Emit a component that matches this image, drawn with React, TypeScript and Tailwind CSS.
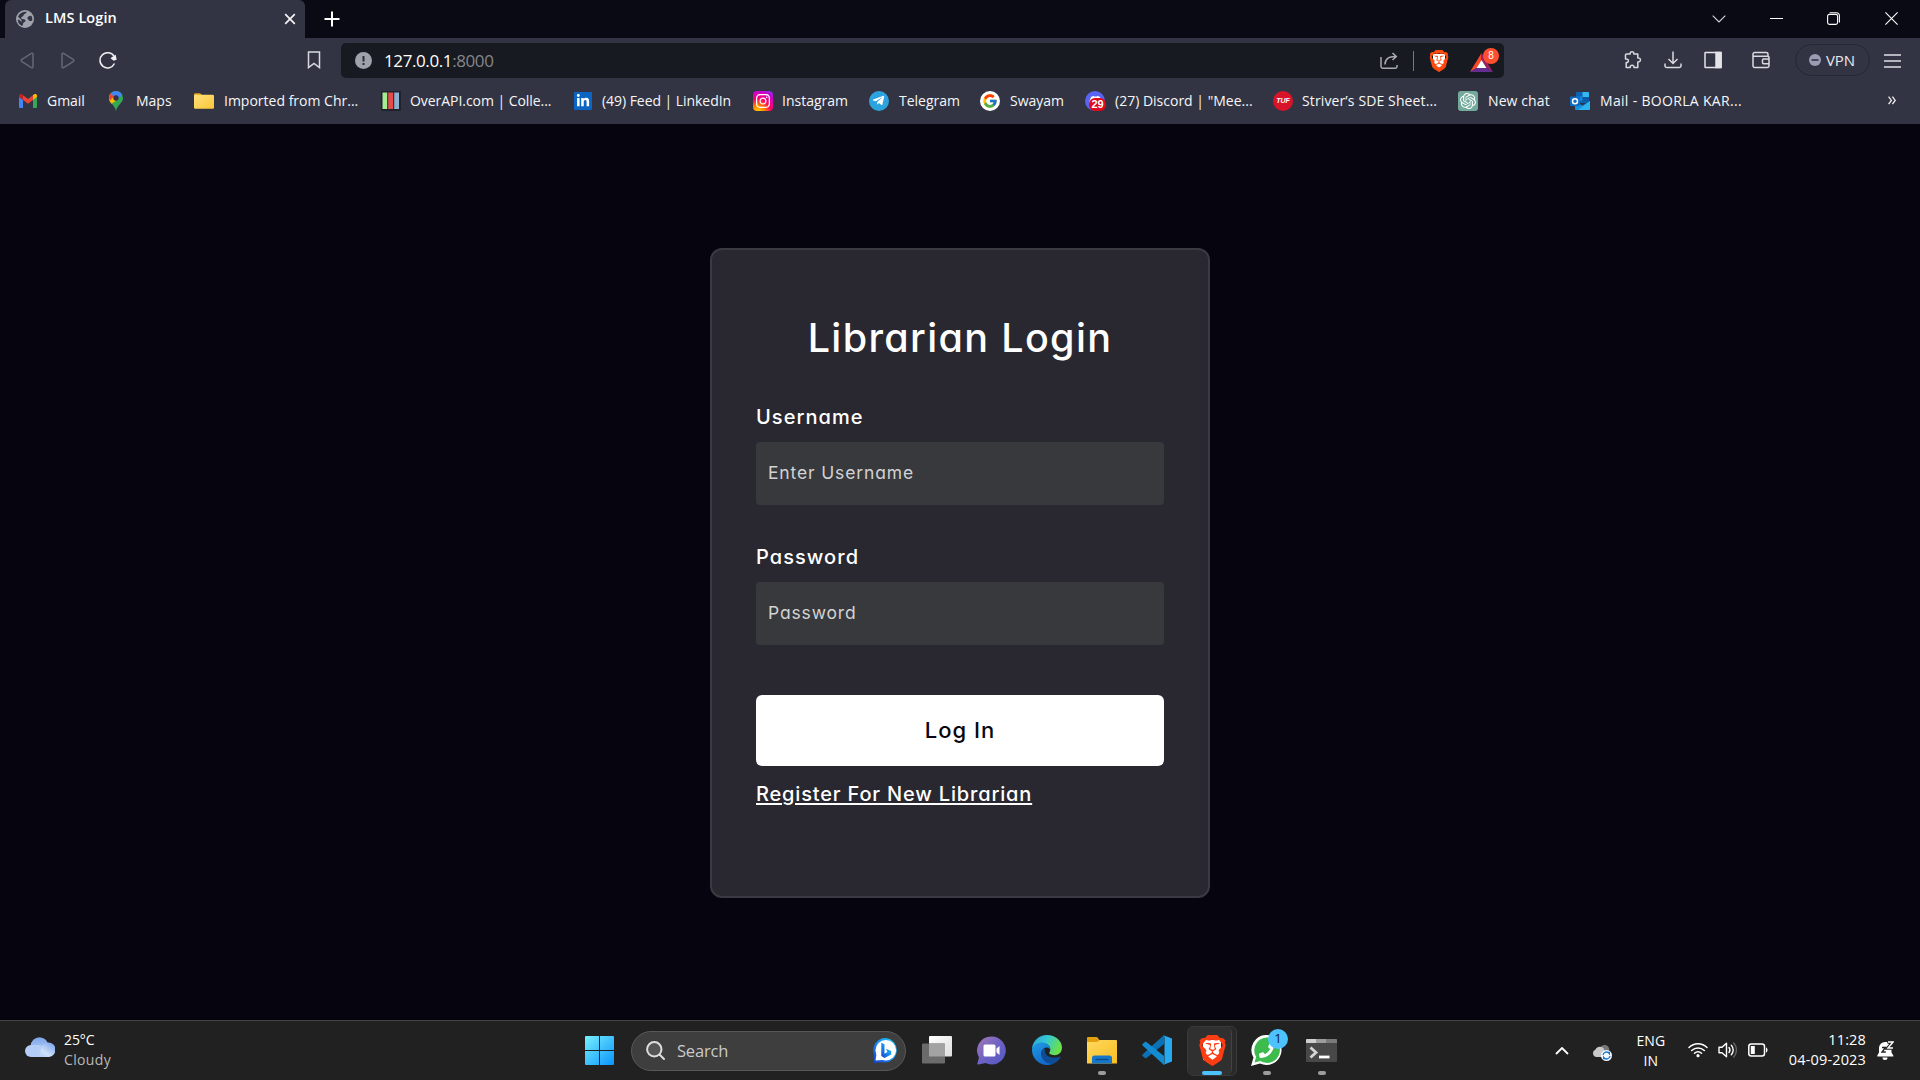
import React from 'react';
import { FaInstagram, FaLinkedinIn, FaTelegramPlane, FaDiscord, FaPhoneAlt } from 'react-icons/fa';
import { FcGoogle } from 'react-icons/fc';
import { SiBrave, SiOpenai } from 'react-icons/si';

function Globe() {
  return (
    <svg className="size-[18px]" viewBox="0 0 18 18">
      <circle cx="9" cy="9" r="9" fill="#a0a2ac" />
      <path d="M10.500 1.800C10.500 4 8 3.500 7.500 5.500 7 7 5 6.500 5.200 8.200 6 9.500 9 8.500 9.500 10.500 9.500 12.500 7 12 7 14c0 1-.5 1.500-1 2A7.300 7.300 0 0 1 1.800 9.500C3 10 4 10 4.500 11L5.500 12 5.500 10 2 6.800C3.500 3.200 7 1.500 10.500 1.800ZM15.500 6C14 5.500 12.500 6.500 11.500 7.500 11 9 12.500 9.500 13 10.500 13.800 11.500 15 11 16.200 10.500 16.500 9 16.300 7.500 15.500 6Z" fill="#323443" />
    </svg>
  );
}

function Gmail() {
  return (
    <svg className="w-[18px] h-[14px]" viewBox="0 0 18 14">
      <path d="M0 3v10a1 1 0 0 0 1 1h3V5.500Z" fill="#4285f4" />
      <path d="M18 3v10a1 1 0 0 1-1 1h-3V5.500Z" fill="#34a853" />
      <path d="M14 1.200V6l4-3V1.800C18 0 16 -.3 14.800.6Z" fill="#fbbc04" />
      <path d="M0 1.800V3l4 3V1.200L3.200.6C2-.3 0 0 0 1.800Z" fill="#c5221f" />
      <path d="M4 6V1.200L9 5l5-3.800V6L9 9.800Z" fill="#ea4335" />
    </svg>
  );
}

function MapsPin() {
  return (
    <svg className="w-[14px] h-5" viewBox="0 0 14 20">
      <path d="M7 0a7 7 0 0 1 7 7c0 5-5.500 6.500-7 13C5.500 13.500 0 12 0 7a7 7 0 0 1 7-7Z" fill="#34a853" />
      <path d="M1.600 2.500 4.800 5.300 9.200 8.300 2.600 12.700C1 11 0 9.500 0 7 0 5 .6 3.600 1.600 2.500Z" fill="#fbbc04" />
      <path d="M1.600 2.500 5 5.300 1 9.500C-.4 7 0 4.500 1.600 2.500Z" fill="#ea4335" />
      <path d="M1.600 2.500A7 7 0 0 1 13.200 3.800L9.500 8 4.600 5.200Z" fill="#4285f4" />
      <circle cx="7" cy="7" r="2.700" fill="#323443" />
    </svg>
  );
}

function Folder() {
  return (
    <svg className="w-5 h-4" viewBox="0 0 20 16">
      <defs>
        <linearGradient id="fold" x1="0" y1="0" x2="1" y2="1"><stop stopColor="#ffe07c" /><stop offset="1" stopColor="#f9c536" /></linearGradient>
      </defs>
      <path d="M0 1.500A1.200 1.200 0 0 1 1.200.3H6l2 1.700h10.500V8H0Z" fill="#e3a21b" />
      <rect y="1.800" width="20" height="14" rx="1.300" fill="url(#fold)" />
    </svg>
  );
}

function OverApi() {
  return (
    <svg className="size-5" viewBox="0 0 20 20">
      <rect width="20" height="20" rx="1" fill="#20232c" />
      <path d="M1.500 1.500h4.700v16.500H1.500Z" fill="#a3ec92" />
      <path d="M7.200 1.500h5v16.500h-5Z" fill="#e54b4b" />
      <path d="M13.200 1.500h4.800v16.500h-4.800Z" fill="#8db0d0" />
    </svg>
  );
}

function LinkedIn() {
  return <span className="grid size-[18px] place-items-center rounded-[1px] bg-[#0a66c2]"><FaLinkedinIn className="size-[14px]" color="#fff" /></span>;
}

function Instagram() {
  return (
    <span className="grid size-5 place-items-center rounded-[4px] bg-[radial-gradient(circle_at_25%_105%,#ffd600_0%,#ff7a00_28%,#ff0169_50%,#d300c5_75%,#7638fa_100%)]">
      <FaInstagram className="size-4" color="#fff" />
    </span>
  );
}

function Telegram() {
  return <span className="grid size-5 place-items-center rounded-full bg-[#2ca3dd]"><FaTelegramPlane className="mr-[2px] size-[13px]" color="#fff" /></span>;
}

function Google() {
  return <span className="grid size-5 place-items-center rounded-full bg-white"><FcGoogle className="size-4" /></span>;
}

function Discord() {
  return (
    <span className="relative grid size-5 place-items-center rounded-full bg-[#5865f2]">
      <FaDiscord className="size-[13px]" color="#fff" />
      <span className="absolute -right-px bottom-0 flex h-[13px] w-[17px] items-center justify-center rounded-[6px] bg-[#e0081c] font-['Liberation_Sans'] text-[11px] font-bold leading-none text-white">29</span>
    </span>
  );
}

function Tuf() {
  return <span className="grid size-5 place-items-center rounded-full bg-[#d7142a] font-['Liberation_Sans'] text-[7px] font-bold italic leading-none text-white">TUF</span>;
}

function ChatGpt() {
  return <span className="grid size-5 place-items-center rounded-[3px] bg-[#74aa9c]"><SiOpenai className="size-4" color="#fff" /></span>;
}

function Outlook() {
  return (
    <svg className="w-5 h-[18px]" viewBox="0 0 20 18">
      <path d="M6 1a1 1 0 0 1 1-1h11a1 1 0 0 1 1 1v10H6Z" fill="#0a63b5" />
      <path d="M12.500 0H18a1 1 0 0 1 1 1v4h-6.500Z" fill="#35b8f1" />
      <path d="M6 4.500h6.500V9H6Z" fill="#1488dc" />
      <path d="M12.500 5H19v4.500h-6.500Z" fill="#0c59a4" />
      <path d="M5 9.500l7.500 4L20 9v8a1 1 0 0 1-1 1H6a1 1 0 0 1-1-1Z" fill="#1490df" />
      <path d="M20 9v8a1 1 0 0 1-1 1H8Z" fill="#2cb3f0" />
      <rect y="4.500" width="10" height="9.500" rx="1" fill="#0f6cc4" />
      <circle cx="5" cy="9.200" r="2.500" fill="none" stroke="#fff" strokeWidth="1.500" />
    </svg>
  );
}

const bookmarks = [
  { Icon: Gmail, label: 'Gmail', width: 'w-[90px]', iconBox: 'w-[18px]', text: 'ml-[10px] tracking-[-0.05px]' },
  { Icon: MapsPin, label: 'Maps', width: 'w-[85px]', iconBox: 'w-[14px]', text: 'ml-[13px]' },
  { Icon: Folder, label: 'Imported from Chr...', width: 'w-[187px]', iconBox: 'w-5', text: 'ml-[10px]' },
  { Icon: OverApi, label: 'OverAPI.com | Colle...', width: 'w-[192px]', iconBox: 'w-5', text: 'ml-[9px] tracking-[-0.05px]' },
  { Icon: LinkedIn, label: '(49) Feed | LinkedIn', width: 'w-[180px]', iconBox: 'w-5', text: 'ml-[9px] tracking-[-0.05px]' },
  { Icon: Instagram, label: 'Instagram', width: 'w-[116px]', iconBox: 'w-5', text: 'ml-[9px]' },
  { Icon: Telegram, label: 'Telegram', width: 'w-[111px]', iconBox: 'w-5', text: 'ml-[10px]' },
  { Icon: Google, label: 'Swayam', width: 'w-[105px]', iconBox: 'w-5', text: 'ml-[10px]' },
  { Icon: Discord, label: '(27) Discord | "Mee...', width: 'w-[188px]', iconBox: 'w-5', text: 'ml-[10px]' },
  { Icon: Tuf, label: 'Striver’s SDE Sheet...', width: 'w-[185px]', iconBox: 'w-5', text: 'ml-[9px] tracking-[0.12px]' },
  { Icon: ChatGpt, label: 'New chat', width: 'w-[112px]', iconBox: 'w-5', text: 'ml-[10px] tracking-[0.1px]' },
  { Icon: Outlook, label: 'Mail - BOORLA KAR...', width: 'w-[180px]', iconBox: 'w-5', text: 'ml-[10px] tracking-[0.32px]' },
];

function TabStrip() {
  return (
    <div className="flex h-[38px] bg-[#0a0a14] pl-[5px]">
      <div className="flex w-[300px] items-center rounded-t-[6px] bg-[#323443] pl-[11px] pr-[9px]">
        <Globe />
        <span className="ml-[11px] pb-[2px] text-[14.5px] font-semibold tracking-[0.1px] text-white">LMS Login</span>
        <svg className="ml-auto size-[12px]" viewBox="0 0 12 12" stroke="#f4f4f6" strokeWidth="1.700"><path d="M1.200 1.200l9.600 9.600M10.800 1.200L1.200 10.800" /></svg>
      </div>
      <svg className="ml-[19px] mt-[11px] size-4" viewBox="0 0 16 16" stroke="#fff" strokeWidth="2"><path d="M8 .5v15M.5 8h15" /></svg>
      <div className="ml-auto flex items-center pb-px pr-[22px]">
        <svg className="mr-[44px] h-2 w-[14px]" viewBox="0 0 14 8" fill="none" stroke="#d8d8dc" strokeWidth="1.100"><path d="M.7.7 7 7l6.300-6.300" /></svg>
        <span className="mr-[44px] h-px w-[13px] bg-white" />
        <svg className="mr-[45px] size-[13px]" viewBox="0 0 13 13" fill="none" stroke="#fff" strokeWidth="1.100"><rect x=".6" y="2.400" width="10" height="10" rx="1.800" /><path d="M2.600.8h7a2.700 2.700 0 0 1 2.800 2.700v7" /></svg>
        <svg className="size-[13px]" viewBox="0 0 13 13" stroke="#fff" strokeWidth="1.100"><path d="M.4.4l12.200 12.200M12.600.4.4 12.600" /></svg>
      </div>
    </div>
  );
}

function Toolbar() {
  return (
    <div className="flex h-[45px] items-center">
      <svg className="ml-5 mb-px h-[17px] w-[14px]" viewBox="0 0 14 17" fill="none" stroke="#656774" strokeWidth="1.500" strokeLinejoin="round"><path d="M13 2.300v12.400c0 1-.9 1.400-1.600.9L1.500 9.300a1 1 0 0 1 0-1.600l9.900-6.300c.7-.5 1.600-.1 1.600.9Z" /></svg>
      <svg className="ml-[27px] mb-px h-[17px] w-[14px]" viewBox="0 0 14 17" fill="none" stroke="#656774" strokeWidth="1.500" strokeLinejoin="round"><path d="M1 2.300v12.400c0 1 .9 1.400 1.600.9l9.900-6.300a1 1 0 0 0 0-1.600L2.600 1.400C1.900.9 1 1.300 1 2.300Z" /></svg>
      <svg className="ml-6 mb-px h-[17px] w-[18px]" viewBox="0 0 18 17" fill="none" stroke="#f0f0f3" strokeWidth="1.500"><path d="M15.200 4.500A7.600 7.600 0 1 0 15.500 11.500" /><path d="M12.800 6.200l3.400-2.300.6 3.300-2 .7Z" fill="#f0f0f3" /></svg>
      <svg className="ml-[190px] mb-px h-[18px] w-[14px]" viewBox="0 0 14 18" fill="none" stroke="#d9dae0" strokeWidth="1.500"><path d="M1.500 1h11v15.600L7 12.400l-5.500 4.200Z" /></svg>
      <div className="ml-5 flex h-[35px] w-[1163px] items-center rounded-[5px] bg-[#181a21] pl-[14px] pr-[5px]">
        <svg className="size-[17px]" viewBox="0 0 17 17"><circle cx="8.500" cy="8.500" r="8.500" fill="#9fa1ab" /><path d="M7.500 4h2v5.500h-2ZM7.500 11h2v2h-2Z" fill="#2a2c36" /></svg>
        <span className="ml-3 text-[17px] tracking-[-0.4px] text-white">127.0.0.1<span className="text-[#85868c]">:8000</span></span>
        <svg className="ml-auto h-[17px] w-[18px]" viewBox="0 0 18 17" fill="none" stroke="#a9abb0" strokeWidth="1.500"><path d="M1 5v9.500a1.700 1.700 0 0 0 1.700 1.700h12.600a1.700 1.700 0 0 0 1.700-1.700V13" /><path d="M5 12.500C5 7.500 8 4.600 15.500 4.600M12.500 1l3.800 3.600L12.500 8" /></svg>
        <span className="ml-[15px] h-5 w-px bg-[#77797f]" />
        <span className="relative ml-[14px] grid size-[22px] place-items-center">
          <span className="absolute h-[14px] w-[12px] bg-white" />
          <SiBrave className="relative size-[22px]" color="#ff4a0d" />
        </span>
        <span className="relative ml-[20px] flex h-[22px] w-[29px] items-end">
          <svg className="h-[19px] w-[23px]" viewBox="0 0 23 19">
            <path d="M11.500 0 0 19l6.500-4 5-8Z" fill="#ff4724" />
            <path d="M11.500 0 23 19l-6.500-4-5-8Z" fill="#9e1f63" />
            <path d="M0 19h23l-6.500-4h-10Z" fill="#662d91" />
            <path d="M11.500 7l5 8h-10Z" fill="#fff" />
          </svg>
          <span className="absolute -top-[2px] right-0 grid size-4 place-items-center rounded-full bg-[#ff4f2e] font-['Liberation_Sans'] text-[10px] leading-none text-white">8</span>
        </span>
      </div>
      <svg className="ml-[120px] mb-px size-[18px]" viewBox="0 0 18 18" fill="none" stroke="#d9dae0" strokeWidth="1.500" strokeLinejoin="round"><path d="M2.500 3h3.700c-.6-3 4.200-3 3.600 0h4v4c3-.8 4 3.800 0 4v5.500H10c.4-3-4.200-3-3.800 0H2.200v-5C5 12 5.500 7.500 1.500 8V4a1 1 0 0 1 1-1Z" /></svg>
      <svg className="ml-[22px] mb-px size-[18px]" viewBox="0 0 18 18" fill="none" stroke="#d9dae0" strokeWidth="1.500"><path d="M9 .5v12M4.500 8 9 12.500 13.500 8M1 12.500v2.300A1.800 1.800 0 0 0 2.800 16.600h12.400a1.800 1.800 0 0 0 1.800-1.800v-2.300" /></svg>
      <svg className="ml-[22px] mb-px size-[18px]" viewBox="0 0 18 18" fill="none" stroke="#e4e4e8" strokeWidth="1.500"><rect x="1" y="1.500" width="16" height="15" rx=".6" /><path d="M12 1.500h5v15h-5Z" fill="#e4e4e8" /></svg>
      <svg className="ml-[30px] mb-px size-[18px]" viewBox="0 0 18 18" fill="none" stroke="#d9dae0" strokeWidth="1.500"><path d="M16 5.200V3.200a1.700 1.700 0 0 0-1.700-1.700H2.700A1.700 1.700 0 0 0 1 3.200v11.600a1.700 1.700 0 0 0 1.700 1.700h12.600a1.700 1.700 0 0 0 1.700-1.700V6.500a1.300 1.300 0 0 0-1.300-1.300H1.500" /><path d="M17 8h-5.500a1 1 0 0 0-1 1v2.800a1 1 0 0 0 1 1H17" /></svg>
      <div className="ml-[25px] mb-px flex h-8 w-[75px] items-center rounded-full border border-[#252733] pl-[13px]">
        <svg className="size-[12px]" viewBox="0 0 12 12"><circle cx="6" cy="6" r="6" fill="#9a9cb3" /><path d="M2.500 5.200h7v1.600h-7Z" fill="#323443" /></svg>
        <span className="ml-[5px] text-[15px] tracking-[-0.1px] text-[#e8e8ee]">VPN</span>
      </div>
      <svg className="ml-[14px] h-[14px] w-[17px]" viewBox="0 0 17 14" stroke="#e0e0e5" strokeWidth="1.500"><path d="M0 1h17M0 7h17M0 13h17" /></svg>
    </div>
  );
}

function Bookmarks() {
  return (
    <div className="flex h-[36px] items-center pb-px pl-[19px]">
      {bookmarks.map(({ Icon, label, width, iconBox, text }) => (
        <div key={label} className={'flex shrink-0 items-center ' + width}>
          <span className={'flex justify-center ' + iconBox}><Icon /></span>
          <span className={'whitespace-nowrap pb-px text-[14px] text-[#f6f6f8] ' + text}>{label}</span>
        </div>
      ))}
      <svg className="ml-[138px] h-[9px] w-2" viewBox="0 0 8 9" fill="none" stroke="#eee" strokeWidth="1.300"><path d="M.6.6 3.400 4.400.6 8.200M4.400.6 7.200 4.400 4.400 8.200" /></svg>
    </div>
  );
}

function Field({ label, placeholder }: { label: string; placeholder: string }) {
  return (
    <label className="flex flex-col">
      <span className="text-[20px] font-medium leading-[30px] tracking-[1.05px]">{label}</span>
      <input placeholder={placeholder} className="mt-[10px] h-[63px] rounded-[4px] bg-[#38393d] px-3 pb-[3px] text-[17.5px] tracking-[0.85px] outline-none placeholder:text-[#d2d2d3]" />
    </label>
  );
}

function LoginCard() {
  return (
    <form className="flex h-[650px] w-[500px] flex-col rounded-[12px] border-2 border-[#3b3a42] bg-[#292730] px-11 pt-[63px] font-[Inter,sans-serif] text-white [font-feature-settings:'cv11']">
      <h1 className="mb-[39px] text-center text-[39.5px] font-medium leading-[50px] tracking-[1.35px]">Librarian Login</h1>
      <div className="flex flex-col gap-[37px]">
        <Field label="Username" placeholder="Enter Username" />
        <Field label="Password" placeholder="Password" />
      </div>
      <button type="button" className="mt-[50px] h-[71px] shrink-0 rounded-[6px] bg-white text-[22px] font-medium tracking-[1px] text-[#080710]">Log In</button>
      <a className="mt-[13px] self-start text-[20px] font-medium leading-[30px] tracking-[0.83px] underline decoration-2 underline-offset-[2px]">Register For New Librarian</a>
    </form>
  );
}

function WindowsLogo() {
  return (
    <svg className="size-[29px]" viewBox="0 0 29 29">
      <defs><linearGradient id="win" x1="0" y1="0" x2="1" y2="1"><stop stopColor="#77f0fd" /><stop offset="1" stopColor="#0a94fc" /></linearGradient></defs>
      <path d="M0 1a1 1 0 0 1 1-1h13v14H0ZM15 0h13a1 1 0 0 1 1 1v13H15ZM0 15h14v14H1a1 1 0 0 1-1-1ZM15 15h14v13a1 1 0 0 1-1 1H15Z" fill="url(#win)" />
    </svg>
  );
}

function Bing() {
  return (
    <svg className="size-[25px]" viewBox="0 0 25 25">
      <defs><linearGradient id="bing" x1="0" y1="1" x2="1" y2="0"><stop stopColor="#1540c8" /><stop offset=".5" stopColor="#1a8cf0" /><stop offset="1" stopColor="#20d0f0" /></linearGradient></defs>
      <path d="M12.500 0A12.300 12.300 0 1 1 9 24.300L.5 25 1 17A12.300 12.300 0 0 1 12.500 0Z" fill="url(#bing)" />
      <circle cx="12.800" cy="12.300" r="10.300" fill="#fff" /><path d="M2.500 22.500 3.500 16l6 6Z" fill="#fff" />
      <path d="M8.300 4.800l3.200 1.500v9.400l3-1.800-1.600-3.200 5.300 2.300v3.400L11.500 20l-3.200-2Z" fill="url(#bing)" />
    </svg>
  );
}

function TaskView() {
  return (
    <svg className="h-7 w-[30px]" viewBox="0 0 30 28">
      <defs><linearGradient id="tv" x1="0" y1="0" x2="1" y2="1"><stop stopColor="#fff" /><stop offset="1" stopColor="#dedede" /></linearGradient></defs>
      <rect x="7" width="23" height="20.500" rx="1" fill="url(#tv)" />
      <rect y="7.500" width="23" height="20" rx="1" fill="#6b6b6b" />
      <path d="M7 7.500h16v13H7Z" fill="#a3a3a3" />
    </svg>
  );
}

function Chat() {
  return (
    <svg className="size-[29px]" viewBox="0 0 29 29">
      <defs><linearGradient id="chat" x1="0" y1="0" x2="1" y2="1"><stop stopColor="#a379b8" /><stop offset=".5" stopColor="#6f62c4" /><stop offset="1" stopColor="#5158c4" /></linearGradient></defs>
      <path d="M14.500.5A14 14 0 1 1 8.500 27L1.500 28.500C.5 28.700 0 28 .5 27L2 21.500A14 14 0 0 1 14.500.5Z" fill="url(#chat)" />
      <rect x="6.500" y="8.500" width="12" height="12" rx="1.500" fill="#fff" /><path d="M19.500 12.500l3-2.500v9l-3-2.500Z" fill="#fff" />
    </svg>
  );
}

function Edge() {
  return (
    <svg className="size-[30px]" viewBox="0 0 30 30">
      <defs>
        <linearGradient id="e1" x1="0" y1="0" x2="1" y2=".4"><stop stopColor="#2a9fe0" /><stop offset=".5" stopColor="#35c8d2" /><stop offset="1" stopColor="#6ae04c" /></linearGradient>
        <linearGradient id="e2" x1="0" y1="0" x2=".5" y2="1"><stop stopColor="#219be4" /><stop offset="1" stopColor="#1169c8" /></linearGradient>
      </defs>
      <path d="M0 14C.5 6 7 0 15 0c8.500 0 15 6 15 12.500 0 5-3.500 7.700-7.500 7.700-3.800 0-5.700-1.600-5.200-2.600C20 14 17.500 8.500 12 8.500 6 8.500 2 11 0 14Z" fill="url(#e1)" />
      <path d="M0 14.500C1 9.500 6 7 11 7.500c4.500.4 7.500 3.700 7 7-2-3-7-2.500-7.500 2C10 22 15 28 22 28.300A15 15 0 0 1 0 14.500Z" fill="url(#e2)" />
      <path d="M10.500 14.500C8 17 8.500 22 12 25.500c4 4 9.500 4 12.500 1.500 2-1.500 3.500-3.500 4-4.800.3-.7-.2-1-.8-.7C23 24 14 22.500 13 17c-.2-1 0-2 .5-3Z" fill="#0e4c95" />
    </svg>
  );
}

function Explorer() {
  return (
    <svg className="h-[27px] w-[30px]" viewBox="0 0 30 27">
      <defs><linearGradient id="ex" x1="0" y1="0" x2="1" y2="1"><stop stopColor="#ffd95e" /><stop offset="1" stopColor="#f9bd22" /></linearGradient></defs>
      <path d="M0 1a1 1 0 0 1 1-1h9l2.500 3H29v8H0Z" fill="#e0a010" />
      <path d="M0 5h10l3-2h16a1 1 0 0 1 1 1v22.500H0Z" fill="url(#ex)" />
      <path d="M5 26.500V21a2.500 2.500 0 0 1 2.500-2.500h15A2.500 2.500 0 0 1 25 21v5.500Z" fill="#1677c9" />
      <path d="M8.500 22.500h13" stroke="#0b4a87" strokeWidth="1.300" />
    </svg>
  );
}

function VsCode() {
  return (
    <svg className="size-[30px]" viewBox="0 0 30 30">
      <path d="M22 0v9L4.500 23c-.5.400-1 .4-1.500 0L.8 21.200c-.6-.5-.6-1.400 0-1.900Z" fill="#0c70b4" />
      <path d="M22 30v-9L4.500 7c-.5-.4-1-.4-1.500 0L.8 8.800c-.6.5-.6 1.400 0 1.900Z" fill="#128bd2" />
      <path d="M21.500.3 30 3.500v23L21.500 29.700C22.500 29 22.500 28 22.500 27V3C22.500 2 22.300 1 21.500.3Z" fill="#27a9f0" />
    </svg>
  );
}

function WhatsApp() {
  return (
    <span className="relative grid size-[31px] place-items-center">
      <svg className="absolute inset-0 size-[31px]" viewBox="0 0 31 31">
        <path d="M16 0A15 15 0 1 1 9 28.500L0 31 2.500 22.500A15 15 0 0 1 16 0Z" fill="#fff" />
        <path d="M16 2.500A12.700 12.700 0 1 1 9.500 26L3.500 27.500 5.200 21.800A12.700 12.700 0 0 1 16 2.500Z" fill="#3dbb4d" />
      </svg>
      <FaPhoneAlt className="relative size-[15px] -scale-x-100" color="#fff" />
      <span className="absolute -right-[6px] -top-[6px] grid size-5 place-items-center rounded-full bg-[#4cc2ff] text-[13px] leading-none text-[#10212c]">1</span>
    </span>
  );
}

function Terminal() {
  return (
    <svg className="h-[23px] w-[31px]" viewBox="0 0 31 23">
      <rect width="31" height="23" rx="1" fill="#484848" />
      <path d="M0 1a1 1 0 0 1 1-1h9v4H0Z" fill="#cfcfcf" /><path d="M10 0h10v4H10Z" fill="#9c9c9c" /><path d="M20 0h10a1 1 0 0 1 1 1v3H20Z" fill="#7a7a7a" />
      <path d="M4.500 8.500 10 13.500 4.500 18.500" fill="none" stroke="#d4d4d4" strokeWidth="2.800" /><path d="M13 18h10.500" stroke="#fff" strokeWidth="2.800" />
    </svg>
  );
}

function TaskItem({ children, indicator }: { children: React.ReactNode; indicator?: boolean }) {
  return (
    <span className="flex h-[50px] w-[55px] shrink-0 flex-col items-center">
      <span className="grid h-[45px] place-items-center pt-[4px]">{children}</span>
      {indicator && <span className="h-1 w-2 rounded-full bg-[#9c9c9c]" />}
    </span>
  );
}

function Cloud() {
  return (
    <svg className="h-5 w-[30px]" viewBox="0 0 30 20">
      <defs>
        <linearGradient id="cl" x1="0" y1="0" x2="0" y2="1"><stop stopColor="#7ba5e8" /><stop offset="1" stopColor="#c4d9fb" /></linearGradient>
        <linearGradient id="cl2" x1="1" y1="0" x2="0" y2="1"><stop stopColor="#6f9ae6" /><stop offset=".6" stopColor="#cfe1fc" /><stop offset="1" stopColor="#a9c6f5" /></linearGradient>
      </defs>
      <circle cx="14.500" cy="9" r="8.800" fill="url(#cl)" />
      <rect y="8" width="20" height="12" rx="6" fill="#b5cef7" />
      <path d="M10 20c4 0 5-4 6-8a7.300 7.300 0 1 1 8 8Z" fill="url(#cl2)" />
    </svg>
  );
}

function Taskbar() {
  return (
    <footer className="flex h-[60px] items-stretch border-t border-[#454545] bg-[#212121]">
      <div className="flex w-[584px] shrink-0 items-center pl-[25px]">
        <span className="-mt-[7px]"><Cloud /></span>
        <div className="ml-[9px] pb-[2px] text-[14px] leading-5 text-white">
          <div className="tracking-[-0.1px]">25°C</div>
          <div className="tracking-[0.35px] text-[#b8b8b8]">Cloudy</div>
        </div>
      </div>
      <div className="flex shrink-0 items-center">
        <span className="ml-[1px] shrink-0"><WindowsLogo /></span>
        <div className="ml-[17px] flex h-10 w-[275px] shrink-0 items-center rounded-full border border-[#585858] bg-[#3e3e3e] pl-[14px] pr-[7px]">
          <svg className="size-5" viewBox="0 0 20 20" fill="none" stroke="#dedede" strokeWidth="2" strokeLinecap="round"><circle cx="8.300" cy="8.300" r="7.200" fill="#555" /><path d="M13.500 13.500l4.500 4.500" /></svg>
          <span className="ml-[11px] pt-px text-[16.5px] tracking-[-0.2px] text-[#cacaca]">Search</span>
          <span className="ml-auto"><Bing /></span>
        </div>
        <div className="ml-[3px] flex shrink-0">
          <TaskItem><TaskView /></TaskItem>
          <TaskItem><Chat /></TaskItem>
          <TaskItem><Edge /></TaskItem>
          <TaskItem indicator><Explorer /></TaskItem>
          <TaskItem><VsCode /></TaskItem>
          <span className="flex w-[55px] justify-center">
            <span className="flex h-[50px] w-[50px] rounded-[6px] border border-[#3a3a3a] bg-[#292929]">
              <span className="flex h-full w-[44px] flex-col items-center rounded-[6px] border-r border-[#434343] bg-[#303030]">
                <span className="relative ml-[6px] mt-[8px] grid size-[30px] place-items-center">
                  <span className="absolute h-5 w-[18px] bg-white" />
                  <SiBrave className="relative size-[31px]" color="#ff3d12" />
                </span>
                <span className="ml-[6px] mt-[6px] h-1 w-5 rounded-full bg-[#4cc2ff]" />
              </span>
            </span>
          </span>
          <TaskItem indicator><WhatsApp /></TaskItem>
          <TaskItem indicator><Terminal /></TaskItem>
        </div>
      </div>
      <div className="ml-auto flex items-center pr-[26px] text-white">
        <svg className="mr-[23px] h-2 w-[14px]" viewBox="0 0 14 8" fill="none" stroke="#fff" strokeWidth="1.800"><path d="M1 7l6-6 6 6" /></svg>
        <svg className="mr-[24px] mt-[2px] h-[18px] w-5" viewBox="0 0 20 18">
          <path d="M8 4.500a5 5 0 0 1 9.300 1.800L17 13H9Z" fill="#777" /><path d="M4 14a4 4 0 0 1-.5-7.600 5 5 0 0 1 8.500-.4L14 14Z" fill="#c9c9c9" />
          <circle cx="14.500" cy="12.500" r="5.500" fill="#f2f8ff" /><path d="M11 12a3.500 3.500 0 0 1 6.300-1.500v-1.700M18 13a3.500 3.500 0 0 1-6.300 1.500v1.700" fill="none" stroke="#1274cf" strokeWidth="1.300" />
        </svg>
        <div className="mr-[22px] w-[30px] text-center text-[14px] leading-5"><div>ENG</div><div>IN</div></div>
        <svg className="mr-[10px] mb-px h-4 w-5" viewBox="0 0 20 16" fill="none" stroke="#fff" strokeWidth="1.500" strokeLinecap="round"><path d="M1 5.500a12.700 12.700 0 0 1 18 0M3.700 8.500a9 9 0 0 1 12.600 0M6.500 11.300a5 5 0 0 1 7 0" /><circle cx="10" cy="13.700" r="1.600" fill="#fff" stroke="none" /></svg>
        <svg className="mr-[10px] mb-px h-4 w-5" viewBox="0 0 20 16" fill="none" stroke="#fff" strokeWidth="1.400" strokeLinejoin="round" strokeLinecap="round"><path d="M1 5.300h3L8.500 1.200v13.600L4 10.700H1Z" /><path d="M11 5.500a4 4 0 0 1 0 5M13.300 3.200a7 7 0 0 1 0 9.600" /><path d="M15.700 1a10.300 10.300 0 0 1 0 14" stroke="#666" /></svg>
        <svg className="mr-[21px] mb-px h-[14px] w-5" viewBox="0 0 20 14"><rect x=".8" y="1" width="15.700" height="12" rx="2.500" fill="none" stroke="#fff" strokeWidth="1.500" /><path d="M2.800 3h4v8h-4ZM18 4.500c2 .5 2 4.500 0 5Z" fill="#fff" /></svg>
        <div className="mr-[11px] whitespace-nowrap pb-[2px] text-right text-[14.5px] leading-5 tracking-[0.15px]"><div>11:28</div><div>04-09-2023</div></div>
        <svg className="h-[19px] w-[17px]" viewBox="0 0 17 19"><path d="M8 1a6 6 0 0 0-6 6v4.500L.3 14.500V15.500h16v-1L14.500 11.500V5L10 1Z" fill="#fff" /><path d="M5.500 16.500h5a2.500 2.500 0 0 1-5 0Z" fill="#fff" /><path d="M5 6.500h3.500L5 11h3.800" fill="none" stroke="#212121" strokeWidth="1.300" /><path d="M10.500 1H16l-5 6H16.500" fill="none" stroke="#212121" strokeWidth="3.500" /><path d="M11 1h5l-5 6H16" fill="none" stroke="#fff" strokeWidth="1.400" /></svg>
      </div>
    </footer>
  );
}

export default function App() {
  return (
    <div className="flex h-[1080px] w-[1920px] flex-col overflow-hidden bg-[#06040f] font-['Open_Sans',sans-serif]">
      <header>
        <TabStrip />
        <div className="h-[86px] bg-[#323443]">
          <Toolbar />
          <Bookmarks />
        </div>
      </header>
      <main className="flex grow justify-center pt-[124px]">
        <LoginCard />
      </main>
      <Taskbar />
    </div>
  );
}
